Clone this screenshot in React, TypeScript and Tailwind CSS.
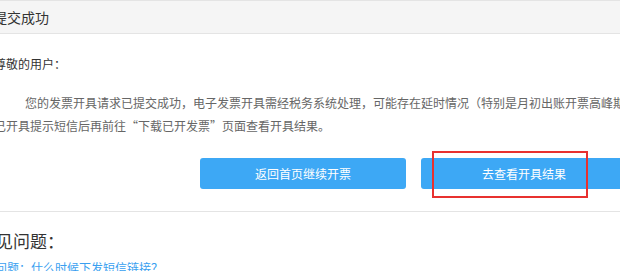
export default function App() {
  return (
    <div className="h-[271px] w-[620px] overflow-hidden bg-white font-['Noto_Sans_CJK_SC',sans-serif]">
      <div className="-ml-[6px] w-[760px]">
        {/* header */}
        <div className="flex h-[34px] items-center border-y border-[#e4e4e4] bg-[#f5f5f5] -ml-[1px] text-[14px] text-[#333]">
          提交成功
        </div>

        <div className="mt-[20px] text-[12px] leading-[20px] text-[#333]">尊敬的用户：</div>

        <p className="mt-[17px] whitespace-nowrap indent-[31px] text-[12px] leading-[23px] text-[#666]">
          您的发票开具请求已提交成功，电子发票开具需经税务系统处理，可能存在延时情况（特别是月初出账开票高峰期），请耐心等待，收到
          <br />
          已开具提示短信后再前往“下载已开发票”页面查看开具结果。
        </p>

        <div className="mt-[21px] flex gap-[15px] pl-[206px]">
          <button className="h-[31px] w-[206px] rounded-[3px] bg-[#3da8f5] text-[12px] text-white">
            返回首页继续开票
          </button>
          <div className="relative">
            <button className="h-[31px] w-[206px] rounded-[3px] bg-[#3da8f5] text-[12px] text-white">
              去查看开具结果
            </button>
            <div className="pointer-events-none absolute -top-[7px] left-[11px] h-[47px] w-[156px] border-2 border-[#e8312f]" />
          </div>
        </div>

        <div className="mt-[22px] h-px bg-[#e4e4e4]" />

        <div className="-ml-[15px] mt-[17px] text-[17px] leading-[24px] text-[#333]">常见问题：</div>
        <div className="ml-[1px] mt-[5px] text-[12px] leading-[20px] text-[#3a9ff0]">
          问题：什么时候下发短信链接？
        </div>
      </div>
    </div>
  );
}
